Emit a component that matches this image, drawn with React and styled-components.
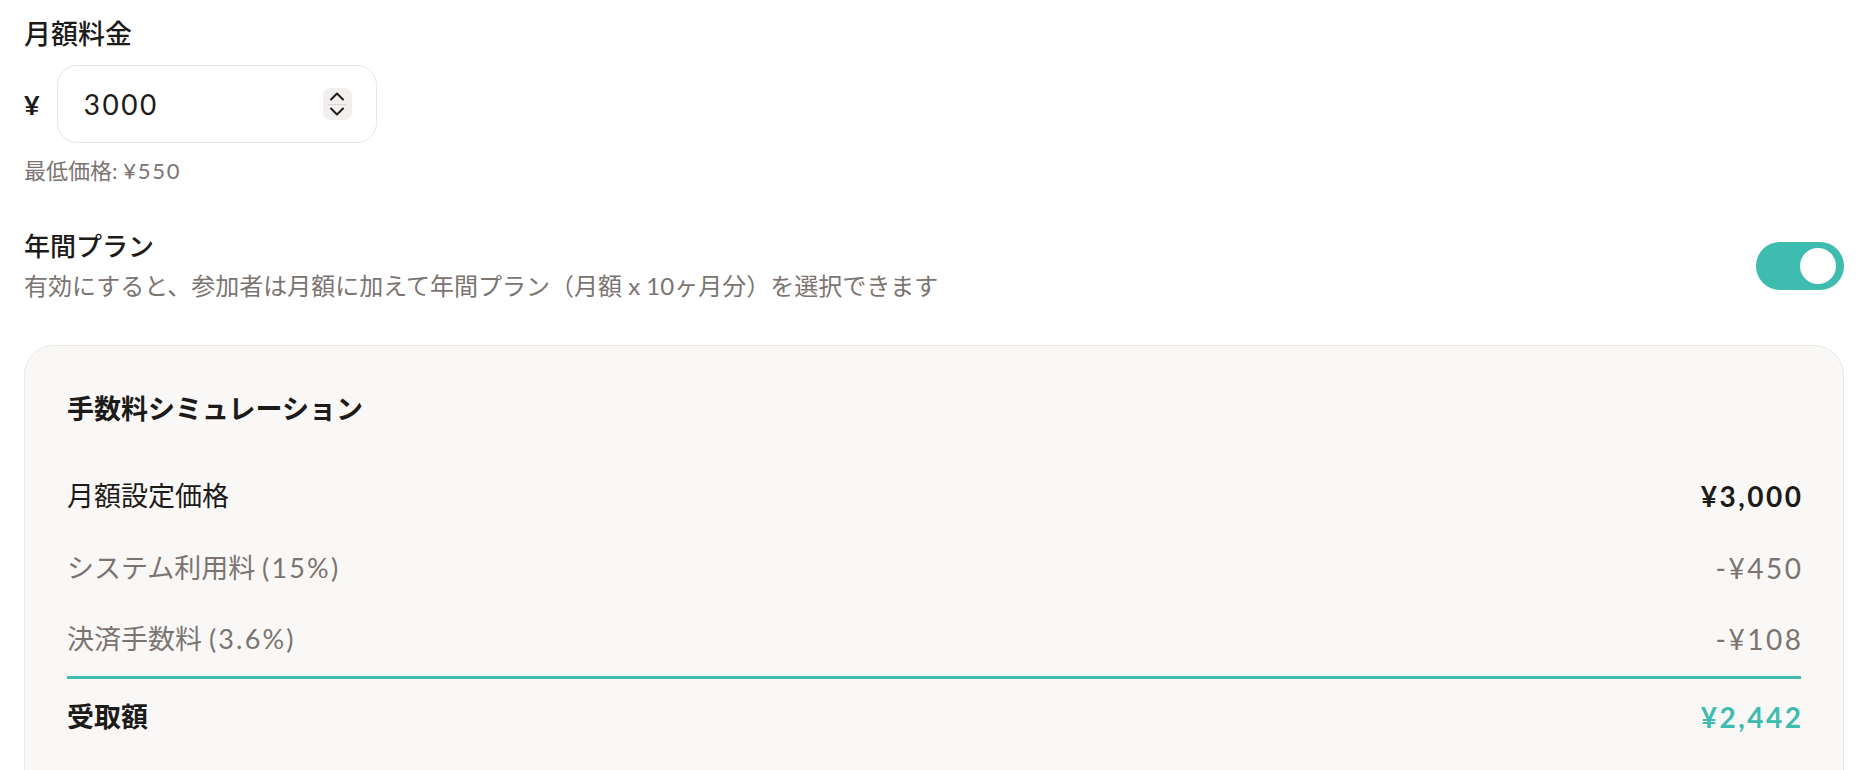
import React, { useState } from "react";
import styled, { createGlobalStyle } from "styled-components";

const GlobalStyle = createGlobalStyle`
  body {
    margin: 0;
    background: #ffffff;
    font-family: Lato, "Noto Sans CJK JP", sans-serif;
    color: #1d1b1a;
  }
`;

const MIN_PRICE = 550;
const SYSTEM_RATE = 0.15;
const PAYMENT_RATE = 0.036;

const yen = (n) => "¥" + n.toLocaleString("en-US");

export default function App() {
  const [price, setPrice] = useState(3000);
  const [annual, setAnnual] = useState(true);

  const systemFee = Math.round(price * SYSTEM_RATE);
  const paymentFee = Math.round(price * PAYMENT_RATE);
  const net = price - systemFee - paymentFee;

  return (
    <Page>
      <GlobalStyle />

      <Field>
        <Heading>月額料金</Heading>
        <PriceRow>
          <Currency>¥</Currency>
          <InputBox>
            <PriceInput
              type="number"
              value={price}
              min={MIN_PRICE}
              onChange={(e) => setPrice(Number(e.target.value) || 0)}
            />
            <Spinner>
              <SpinButton onClick={() => setPrice((p) => p + 100)}>
                <svg width="16" height="10" viewBox="0 0 16 10">
                  <path d="M2 8.5 L8 2.5 L14 8.5" fill="none" stroke="#1f1d1c" strokeWidth="2" strokeLinecap="round" strokeLinejoin="round" />
                </svg>
              </SpinButton>
              <SpinDivider />
              <SpinButton onClick={() => setPrice((p) => Math.max(MIN_PRICE, p - 100))}>
                <svg width="16" height="10" viewBox="0 0 16 10">
                  <path d="M2 1.5 L8 7.5 L14 1.5" fill="none" stroke="#1f1d1c" strokeWidth="2" strokeLinecap="round" strokeLinejoin="round" />
                </svg>
              </SpinButton>
            </Spinner>
          </InputBox>
        </PriceRow>
        <Hint>
          最低価格: <Num>{yen(MIN_PRICE)}</Num>
        </Hint>
      </Field>

      <ToggleRow>
        <div>
          <ToggleLabel>年間プラン</ToggleLabel>
          <Description>
            有効にすると、参加者は月額に加えて年間プラン（月額 x 10ヶ月分）を選択できます
          </Description>
        </div>
        <Switch $on={annual} onClick={() => setAnnual((v) => !v)} aria-pressed={annual}>
          <Knob $on={annual} />
        </Switch>
      </ToggleRow>

      <Card>
        <CardTitle>手数料シミュレーション</CardTitle>
        <Row>
          <RowLabel>月額設定価格</RowLabel>
          <RowValue $strong>{yen(price)}</RowValue>
        </Row>
        <Row $muted>
          <RowLabel>
            システム利用料 <Num>(15%)</Num>
          </RowLabel>
          <RowValue>-{yen(systemFee)}</RowValue>
        </Row>
        <Row $muted $last>
          <RowLabel>
            決済手数料 <Num>(3.6%)</Num>
          </RowLabel>
          <RowValue>-{yen(paymentFee)}</RowValue>
        </Row>
        <TotalRow>
          <TotalLabel>受取額</TotalLabel>
          <TotalValue>{yen(net)}</TotalValue>
        </TotalRow>
      </Card>
    </Page>
  );
}

/* ----------------------------- STYLED COMPONENTS ----------------------------- */

const Page = styled.div`
  padding: 14px 24px 0 24px;
`;

const Num = styled.span`
  letter-spacing: 0.08em;
`;

const Field = styled.div`
  display: flex;
  flex-direction: column;
  gap: 11px;
`;

const Heading = styled.div`
  font-size: 27px;
  font-weight: 500;
  line-height: 40px;
  color: #1d1b1a;
`;

const PriceRow = styled.div`
  display: flex;
  align-items: center;
  gap: 17px;
`;

const Currency = styled.span`
  font-size: 27px;
  font-weight: 700;
  color: #1d1b1a;
`;

const InputBox = styled.div`
  display: flex;
  align-items: center;
  box-sizing: border-box;
  width: 320px;
  height: 78px;
  padding: 0 24px 0 26px;
  border: 1.5px solid #e9e7e4;
  border-radius: 20px;
  background: #ffffff;
`;

const PriceInput = styled.input`
  flex: 1;
  min-width: 0;
  border: none;
  outline: none;
  background: transparent;
  font-family: Lato, "Noto Sans CJK JP", sans-serif;
  font-size: 28px;
  letter-spacing: 0.09em;
  color: #1d1b1a;
  padding: 0;
  -moz-appearance: textfield;

  &::-webkit-inner-spin-button,
  &::-webkit-outer-spin-button {
    -webkit-appearance: none;
    margin: 0;
  }
`;

const Spinner = styled.div`
  display: flex;
  flex-direction: column;
  align-items: center;
  width: 29px;
  height: 32px;
  border-radius: 7px;
  background: #f1f0ee;
`;

const SpinButton = styled.button`
  flex: 1;
  display: flex;
  align-items: center;
  justify-content: center;
  width: 100%;
  padding: 0;
  border: none;
  background: transparent;
  cursor: pointer;
`;

const SpinDivider = styled.div`
  width: 18px;
  height: 1px;
  background: #d9d7d4;
`;

const Hint = styled.div`
  font-size: 22px;
  line-height: 33px;
  color: #7b7471;
`;

const ToggleRow = styled.div`
  display: flex;
  align-items: center;
  justify-content: space-between;
  margin-top: 40px;
`;

const ToggleLabel = styled.div`
  font-size: 26px;
  font-weight: 500;
  line-height: 39px;
  color: #1d1b1a;
`;

const Description = styled.div`
  margin-top: 2px;
  font-size: 24px;
  line-height: 36px;
  color: #7b7471;
`;

const Switch = styled.button`
  position: relative;
  flex-shrink: 0;
  width: 88px;
  height: 48px;
  padding: 0;
  border: none;
  border-radius: 24px;
  background: ${(p) => (p.$on ? "#3dbcaf" : "#d9d7d4")};
  cursor: pointer;
  transition: background 0.2s;
`;

const Knob = styled.span`
  position: absolute;
  top: 6px;
  left: ${(p) => (p.$on ? "44px" : "6px")};
  width: 36px;
  height: 36px;
  border-radius: 50%;
  background: #ffffff;
  transition: left 0.2s;
`;

const Card = styled.div`
  margin-top: 41px;
  padding: 43px 42px 64px 42px;
  border: 1.5px solid #ebe9e6;
  border-radius: 30px;
  background: #f9f8f6;
`;

const CardTitle = styled.div`
  font-size: 27px;
  font-weight: 700;
  line-height: 40px;
  margin-bottom: 31px;
  color: #1d1b1a;
`;

const Row = styled.div`
  display: flex;
  align-items: center;
  justify-content: space-between;
  box-sizing: border-box;
  color: ${(p) => (p.$muted ? "#7b7471" : "#1d1b1a")};
  border-bottom: ${(p) => (p.$last ? "3px solid #3dbcaf" : "none")};
  height: ${(p) => (p.$last ? "75px" : "72px")};
  padding-bottom: ${(p) => (p.$last ? "2px" : "0")};
`;

const RowLabel = styled.span`
  font-size: 27px;
  line-height: 36px;
`;

const RowValue = styled.span`
  font-size: 28px;
  line-height: 36px;
  letter-spacing: 0.09em;
  margin-right: -0.09em;
  font-weight: ${(p) => (p.$strong ? 700 : 400)};
`;

const TotalRow = styled.div`
  display: flex;
  align-items: center;
  justify-content: space-between;
  padding-top: 20px;
  line-height: 36px;
`;

const TotalLabel = styled.span`
  font-size: 27px;
  font-weight: 700;
  color: #1d1b1a;
`;

const TotalValue = styled.span`
  font-size: 28px;
  font-weight: 700;
  letter-spacing: 0.09em;
  margin-right: -0.09em;
  color: #3dbcaf;
`;
